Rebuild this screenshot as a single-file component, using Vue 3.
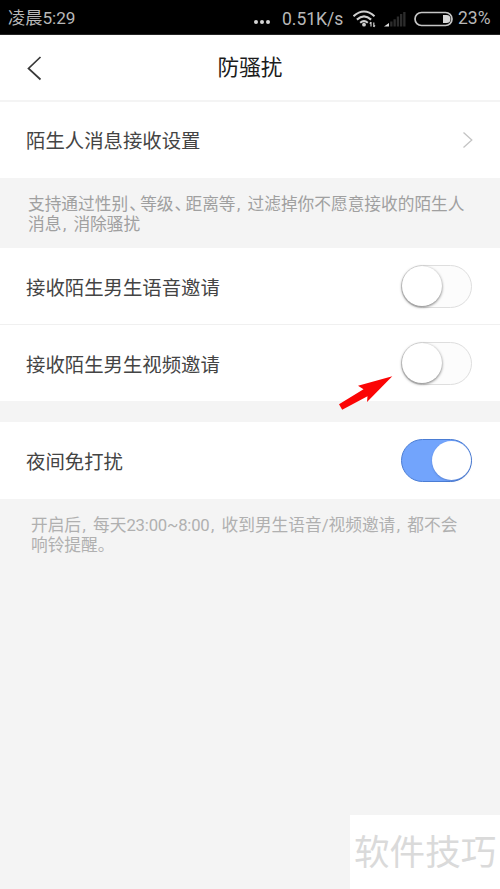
<script setup>
import { ref } from 'vue'

const invites = ref([
  { label: '接收陌生男生语音邀请', on: false },
  { label: '接收陌生男生视频邀请', on: false },
])
const quiet = ref(true)

// Splits a line into runs, so that punctuation and digits get their own spacing.
const kindOf = (text) => {
  if (text === '、') return 'pause'
  if (text === ',') return 'comma'
  return /^\d/.test(text) ? 'digits' : ''
}
const pieces = (line) =>
  line.split(/([,、]|\d[\d:~]*)/).filter(Boolean).map((text) => ({ text, kind: kindOf(text) }))

const filterNote = ['支持通过性别、等级、距离等,过滤掉你不愿意接收的陌生人', '消息,消除骚扰']
const quietNote = ['开启后,每天23:00~8:00,收到男生语音/视频邀请,都不会', '响铃提醒。']
</script>

<template>
  <div class="screen">
    <div class="status">
      <span class="time">凌晨5:29</span>
      <span class="dots"><i></i><i></i><i></i></span>
      <span class="speed">0.51K/s</span>
      <svg class="wifi" width="24" height="18" viewBox="0 0 24 18">
        <g fill="none" stroke="#cfcfcf" stroke-width="2.1">
          <path d="M.5 6.200Q11-3.200 21.500 6.200" />
          <path d="M3.900 9.600Q11 3.200 18.100 9.600" />
          <path d="M7.200 12.700Q11 9.500 14.800 12.700" />
        </g>
        <circle cx="11" cy="14.700" r="1.900" fill="#cfcfcf" />
        <path d="M18 12v4.500M20.800 12.500v4.500M16.800 13.700l1.200-1.500M22 15.300l-1.200 1.500" fill="none" stroke="#cfcfcf" stroke-width="1.200" />
      </svg>
      <svg class="signal" width="22" height="16" viewBox="0 0 22 16">
        <path d="M0 15.500L5 12v3.500z" fill="#dedede" />
        <path d="M6.200 10.500h2.300v5H6.200zM9.500 8.200h2.300v7.300H9.500zM12.800 5.500h2.300v10H12.800zM16 3h2.300v12.500H16zM19.200 1h2.300v14.500H19.200z" fill="#2c2c2c" />
      </svg>
      <svg class="battery" width="40" height="16" viewBox="0 0 40 16">
        <rect x="1" y="1.500" width="37" height="13" rx="6.500" fill="none" stroke="#c6c6c6" stroke-width="1.700" />
        <path d="M29 4h3.500a4 4 0 0 1 0 8H29z" fill="#d8d8d8" />
      </svg>
      <span class="percent">23%</span>
    </div>

    <header class="bar">
      <svg class="back" width="16" height="26" viewBox="0 0 16 26">
        <path d="M13.500 2L1.500 13.500L13.500 24.500" fill="none" stroke="#383838" stroke-width="1.700" />
      </svg>
      <h1>防骚扰</h1>
    </header>

    <section class="row">
      <span>陌生人消息接收设置</span>
      <svg class="chevron" width="12" height="18" viewBox="0 0 12 18">
        <path d="M1.500 1.500L9.800 9L1.500 16.500" fill="none" stroke="#c4c4c4" stroke-width="1.300" />
      </svg>
    </section>
    <div class="note">
      <p v-for="line in filterNote" :key="line">
        <span v-for="(part, i) in pieces(line)" :key="i" :class="part.kind">{{ part.text }}</span>
      </p>
    </div>

    <section v-for="item in invites" :key="item.label" class="row invite">
      <span>{{ item.label }}</span>
      <button class="switch" :class="{ on: item.on }" @click="item.on = !item.on"><i></i></button>
    </section>

    <section class="row quiet">
      <span>夜间免打扰</span>
      <button class="switch" :class="{ on: quiet }" @click="quiet = !quiet"><i></i></button>
    </section>
    <div class="note pale">
      <p v-for="line in quietNote" :key="line">
        <span v-for="(part, i) in pieces(line)" :key="i" :class="part.kind">{{ part.text }}</span>
      </p>
    </div>

    <svg class="pointer" width="56" height="36" viewBox="0 0 56 36">
      <path d="M53.300.300L19 9.700L24.500 13.200L0 28.200L3.200 33.800L28.500 20.300L28 26Z" fill="#fb0505" />
    </svg>
    <div class="watermark">软件技巧</div>
  </div>
</template>

<style>
body {
  margin: 0;
  background: #f4f4f4;
}
</style>

<style scoped>
.screen {
  position: relative;
  width: 500px;
  height: 889px;
  overflow: hidden;
  background: #f4f4f4;
  color: #444;
  font-family: Roboto, "Noto Sans CJK SC", sans-serif;
}
.status {
  box-sizing: border-box;
  display: flex;
  align-items: center;
  height: 35px;
  padding: 3px 0 0 8px;
  background: #000;
  border-bottom: 1px solid #242424;
  color: #b8b8b8;
  font-size: 17.5px;
  line-height: 31px;
  white-space: nowrap;
}
.time {
  width: 246px;
  font-size: 17.2px;
}
.dots {
  display: flex;
  gap: 2px;
  width: 28px;
  padding-top: 7px;
}
.dots i {
  width: 4px;
  height: 4px;
  border-radius: 50%;
  background: #d5d5d5;
}
.speed {
  width: 71px;
  padding-top: 1px;
  font-size: 17.5px;
}
.wifi {
  width: 24px;
  margin-right: 7px;
}
.signal {
  margin: 1px 8px 0 0;
}
.battery {
  margin-right: 4px;
}
.bar {
  box-sizing: border-box;
  display: grid;
  grid-template-columns: 1fr auto 1fr;
  align-items: center;
  height: 67px;
  padding: 0 27px;
  background: #fff;
  border-bottom: 2px solid #f4f4f4;
}
h1 {
  margin: 0;
  color: #1c1c1c;
  font-size: 21.7px;
  font-weight: 400;
  line-height: 31px;
}
.row {
  box-sizing: border-box;
  display: flex;
  align-items: center;
  justify-content: space-between;
  height: 76px;
  padding: 0 28px 0 26px;
  background: #fff;
  font-size: 19.4px;
  line-height: 30px;
}
.row > span {
  padding-top: 4px;
}
.invite > span {
  padding-top: 6px;
}
.chevron {
  margin-right: -2px;
}
.invite + .invite {
  height: 77px;
  border-top: 1px solid #f0f0f0;
}
.quiet {
  height: 77px;
  margin-top: 21px;
}
.switch {
  box-sizing: border-box;
  width: 71px;
  height: 43px;
  padding: 0;
  border: 1.5px solid #dedede;
  border-radius: 22px;
  background: #fcfcfc;
}
.switch i {
  display: block;
  width: 40px;
  height: 40px;
  border-radius: 50%;
  background: #fff;
  box-shadow: 0 1px 3px rgba(0, 0, 0, 0.55);
}
.switch.on {
  padding-left: 30px;
  border-color: #4b7dd4;
  background: #72a4fc;
}
.switch.on i {
  width: 39px;
  height: 39px;
  box-shadow: 0 1px 2px rgba(30, 60, 130, 0.3);
}
.note {
  box-sizing: border-box;
  height: 70px;
  padding: 17px 0 0 28px;
  color: #a0a0a0;
  font-size: 16.7px;
  line-height: 20px;
  white-space: nowrap;
}
.note p {
  display: flex;
  margin: 0;
}
.note.pale {
  padding-left: 31px;
  color: #b0b0b0;
}
.comma {
  box-sizing: border-box;
  width: 12px;
  padding-left: 1.5px;
}
.pause {
  box-sizing: border-box;
  width: 12px;
  padding-left: 1px;
  font-feature-settings: "halt";
}
.digits {
  letter-spacing: -0.2px;
}
.pointer {
  position: absolute;
  left: 339px;
  top: 376px;
}
.watermark {
  position: absolute;
  right: 0;
  bottom: 0;
  box-sizing: border-box;
  width: 150px;
  height: 74px;
  padding: 1px 0 0 4px;
  background: #fff;
  color: #dadada;
  font-size: 35.6px;
  font-weight: 400;
  line-height: 74px;
  white-space: nowrap;
}
</style>
